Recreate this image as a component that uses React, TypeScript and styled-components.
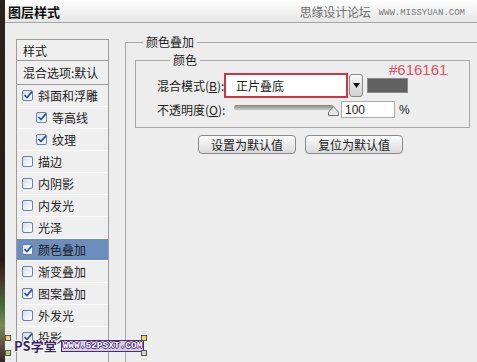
import React from 'react';
import styled, { createGlobalStyle } from 'styled-components';

const GlobalStyle = createGlobalStyle`
  html,
  body {
    margin: 0;
    width: 477px;
    height: 362px;
    overflow: hidden;
    background: #ededed;
  }

  body {
    font-family: 'Noto Sans CJK SC', 'Noto Sans', sans-serif;
    font-size: 12px;
    color: #1c1c1c;
  }
`;

const Frame = styled.div`
  position: relative;
  display: flex;
  width: 477px;
  height: 362px;
  overflow: hidden;
`;

const EdgeStrip = styled.div`
  flex: none;
  width: 5px;
  background: linear-gradient(
    to bottom,
    #2c221d 0%,
    #261c18 72%,
    #4b3a2c 78%,
    #3f6a3c 84%,
    #7b8a5e 90%,
    #5a4a3a 96%,
    #2c2a24 100%
  );
`;

const Dialog = styled.div`
  flex: 1;
  min-width: 0;
  display: flex;
  flex-direction: column;
`;

const TitleBar = styled.div`
  flex: none;
  height: 22px;
  display: flex;
  align-items: center;
  padding: 0 12px 0 3px;
  border-bottom: 1px solid #a4a4a4;
  background: linear-gradient(to bottom, #ffffff, #e6e6e6);
`;

const Title = styled.div`
  font-size: 13px;
  font-weight: 700;
  color: #111;
`;

const SiteMark = styled.div`
  margin-left: auto;
  display: flex;
  align-items: center;
  gap: 8px;
  color: #6e6e6e;
`;

const SiteName = styled.span`
  font-size: 12px;
  letter-spacing: -0.2px;
`;

const SiteUrl = styled.span`
  font-family: 'Liberation Mono', monospace;
  font-size: 9px;
  padding-top: 3px;
  color: #777;
`;

const Content = styled.div`
  flex: 1;
  display: flex;
  align-items: stretch;
  padding: 11px 0 0 11px;
  margin-right: -10px;
  margin-bottom: -20px;
`;

const StyleList = styled.div`
  flex: none;
  width: 91px;
  margin-top: 5px;
  border: 1px solid #9c9c9c;
  background: #efefef;
  display: flex;
  flex-direction: column;
`;

const ListHeader = styled.div<{ $h: number }>`
  height: ${(p) => p.$h}px;
  display: flex;
  align-items: center;
  padding-left: 6px;
  border-bottom: 1px solid #9c9c9c;
  white-space: nowrap;
`;

const ListItem = styled.div<{ $sub?: boolean; $active?: boolean }>`
  height: 21px;
  display: flex;
  align-items: center;
  gap: 5px;
  padding-left: ${(p) => (p.$sub ? 19 : 5)}px;
  border-bottom: 1px solid #fbfbfb;
  background: ${(p) => (p.$active ? '#6c8ebd' : 'transparent')};
  white-space: nowrap;
`;

const Box = styled.span`
  flex: none;
  width: 9px;
  height: 9px;
  border: 1px solid #6b83a6;
  border-radius: 2px;
  background: linear-gradient(135deg, #d9dfe8, #ffffff);
  position: relative;

  svg {
    position: absolute;
    left: -1px;
    top: -2px;
  }
`;

const Check = ({ on }: { on: boolean }) => (
  <Box>
    {on && (
      <svg width="12" height="12" viewBox="0 0 12 12">
        <path d="M2.5 6 L5 8.6 L10 2.6" fill="none" stroke="#2153a3" strokeWidth="1.7" />
      </svg>
    )}
  </Box>
);

const Group = styled.fieldset`
  margin: 0 0 0 16px;
  padding: 0 16px 0 9px;
  flex: 1;
  min-width: 0;
  border: 1px solid #a8a8a8;
  border-bottom: none;
`;

const Legend = styled.legend<{ $indent: number }>`
  margin-left: ${(p) => p.$indent}px;
  padding: 0 3px;
  line-height: 16px;
  font-size: 12px;
`;

const SubGroup = styled.fieldset`
  margin: 2px 0 0;
  padding: 0 0 9px 21px;
  border: 1px solid #a8a8a8;
`;

const Row = styled.div<{ $h: number; $top: number }>`
  display: flex;
  align-items: center;
  height: ${(p) => p.$h}px;
  margin-top: ${(p) => p.$top}px;
`;

const Label = styled.span`
  flex: none;
  width: 67px;
  white-space: nowrap;

  u {
    text-decoration: underline;
  }
`;

const SelectBox = styled.div`
  box-sizing: border-box;
  width: 124px;
  height: 25px;
  border: 2px solid #cf3541;
  background: #fff;
  display: flex;
  align-items: center;
  padding-left: 10px;
`;

const DropButton = styled.div`
  box-sizing: border-box;
  width: 14px;
  height: 23px;
  margin-left: 1px;
  border: 1px solid #8c8c8c;
  border-radius: 3px;
  background: linear-gradient(to bottom, #fafafa, #cfcfcf);
  display: flex;
  align-items: center;
  justify-content: center;
`;

const Swatch = styled.div<{ $color: string }>`
  position: relative;
  box-sizing: border-box;
  width: 41px;
  height: 15px;
  margin-left: 4px;
  background: ${(p) => p.$color};
  border: 1px solid #8a8a8a;
`;

const HexNote = styled.span`
  position: absolute;
  left: 21px;
  top: -17px;
  font-family: 'Liberation Sans', Arial, sans-serif;
  font-size: 15px;
  line-height: 16px;
  color: #e0525d;
  white-space: nowrap;
`;

const Slider = styled.div`
  position: relative;
  flex: none;
  width: 100px;
  height: 5px;
  margin: 0 0 4px 10px;
  border-radius: 3px;
  background: linear-gradient(to bottom, #858585, #c9c9c9);
`;

const Thumb = styled.svg`
  position: absolute;
  right: -5px;
  top: 1px;
`;

const NumberField = styled.div`
  box-sizing: border-box;
  width: 54px;
  height: 17px;
  margin-left: 7px;
  border: 1px solid #a9a9a9;
  background: #fff;
  display: flex;
  align-items: center;
  padding-left: 3px;
  font-family: 'Liberation Sans', Arial, sans-serif;
`;

const Unit = styled.span`
  margin-left: 4px;
  font-family: 'Liberation Sans', Arial, sans-serif;
`;

const ButtonRow = styled.div`
  display: flex;
  justify-content: center;
  gap: 9px;
  margin-top: 7px;
  padding-right: 4px;
`;

const Button = styled.button`
  box-sizing: border-box;
  width: 98px;
  height: 19px;
  padding: 0;
  border: 1px solid #8a8a8a;
  border-radius: 4px;
  background: linear-gradient(to bottom, #fdfdfd, #d9d9d9);
  font-family: inherit;
  font-size: 12px;
  color: #1c1c1c;
  line-height: 17px;
`;

const Watermark = styled.div`
  position: absolute;
  left: 5px;
  bottom: 6px;
  width: 142px;
  height: 21px;
  display: flex;
  align-items: center;
  gap: 4px;
  padding-left: 9px;
  box-sizing: border-box;
  white-space: nowrap;
`;

const Corner = styled.span<{ $x: string; $y: string; $c: string }>`
  position: absolute;
  ${(p) => p.$x};
  ${(p) => p.$y};
  width: 4px;
  height: 4px;
  border: 1px solid #5a5a40;
  background: ${(p) => p.$c};
`;

const MarkTitle = styled.span`
  flex: none;
  font-size: 13px;
  font-weight: 700;
  color: #3c1f66;
  text-shadow: 1px 0 #fff, -1px 0 #fff, 0 1px #fff, 0 -1px #fff;
  line-height: 16px;
`;

const MarkUrl = styled.span`
  flex: none;
  font-family: 'Liberation Mono', monospace;
  font-size: 9.5px;
  font-weight: 700;
  line-height: 10px;
  padding: 0 1px;
  color: #fff;
  background: #d8cce4;
  border: 1px solid #4a2a78;
  text-shadow: 1px 0 #4a2a78, -1px 0 #4a2a78, 0 1px #4a2a78, 0 -1px #4a2a78;
`;

const items = [
  { name: '斜面和浮雕', on: true },
  { name: '等高线', on: true, sub: true },
  { name: '纹理', on: true, sub: true },
  { name: '描边', on: false },
  { name: '内阴影', on: false },
  { name: '内发光', on: false },
  { name: '光泽', on: false },
  { name: '颜色叠加', on: true, active: true },
  { name: '渐变叠加', on: false },
  { name: '图案叠加', on: true },
  { name: '外发光', on: false },
  { name: '投影', on: true },
];

export default function App() {
  return (
    <Frame>
      <GlobalStyle />
      <EdgeStrip />
      <Dialog>
        <TitleBar>
          <Title>图层样式</Title>
          <SiteMark>
            <SiteName>思缘设计论坛</SiteName>
            <SiteUrl>WWW.MISSYUAN.COM</SiteUrl>
          </SiteMark>
        </TitleBar>
        <Content>
          <StyleList>
            <ListHeader $h={20}>样式</ListHeader>
            <ListHeader $h={23}>混合选项:默认</ListHeader>
            {items.map((it) => (
              <ListItem key={it.name} $sub={it.sub} $active={it.active}>
                <Check on={it.on} />
                {it.name}
              </ListItem>
            ))}
          </StyleList>
          <Group>
            <Legend $indent={8}>颜色叠加</Legend>
            <SubGroup>
              <Legend $indent={13}>颜色</Legend>
              <Row $h={25} $top={5}>
                <Label>
                  混合模式(<u>B</u>):
                </Label>
                <SelectBox>正片叠底</SelectBox>
                <DropButton>
                  <svg width="7" height="5" viewBox="0 0 7 5">
                    <path d="M0 0 H7 L3.5 5 Z" fill="#111" />
                  </svg>
                </DropButton>
                <Swatch $color="#616161">
                  <HexNote>#616161</HexNote>
                </Swatch>
              </Row>
              <Row $h={17} $top={3}>
                <Label>
                  不透明度(<u>O</u>):
                </Label>
                <Slider>
                  <Thumb width="11" height="10" viewBox="0 0 11 10">
                    <path d="M0.5 9.5 V6 L5.5 0.8 L10.5 6 V9.5 Z" fill="#e6e6e6" stroke="#777" />
                  </Thumb>
                </Slider>
                <NumberField>100</NumberField>
                <Unit>%</Unit>
              </Row>
            </SubGroup>
            <ButtonRow>
              <Button>设置为默认值</Button>
              <Button>复位为默认值</Button>
            </ButtonRow>
          </Group>
        </Content>
      </Dialog>
      <Watermark>
        <Corner $x="left: 0" $y="top: 0" $c="#e8d870" />
        <Corner $x="left: 0" $y="bottom: 0" $c="#9fd080" />
        <Corner $x="right: 0" $y="top: 0" $c="#e8d870" />
        <Corner $x="right: 0" $y="bottom: 0" $c="#d0d0d0" />
        <MarkTitle>PS学堂</MarkTitle>
        <MarkUrl>WWW.52PSXT.COM</MarkUrl>
      </Watermark>
    </Frame>
  );
}
